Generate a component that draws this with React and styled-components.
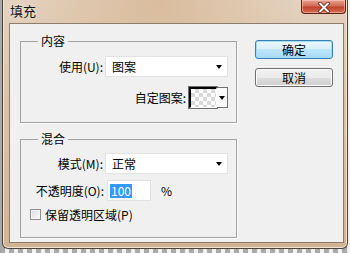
import React from 'react'
import styled, { createGlobalStyle } from 'styled-components'

const GlobalStyle = createGlobalStyle`
  html, body {
    margin: 0;
    padding: 0;
  }
  body {
    width: 350px;
    height: 253px;
    overflow: hidden;
    background: repeating-linear-gradient(90deg, #a9a9a9 0 5px, #f2f2f2 5px 9px);
    font-family: "Noto Sans CJK SC", "Microsoft YaHei", sans-serif;
    font-size: 12px;
    color: #000;
  }
`

const Window = styled.div`
  margin-left: 2px;
  width: 346px;
  height: 249px;
  box-sizing: border-box;
  border: 1px solid #4f4236;
  border-top: none;
  border-radius: 0 0 6px 6px;
  background:
    radial-gradient(ellipse at 45% 0%, #d9bc9d 0%, rgba(217, 188, 157, 0) 55%),
    linear-gradient(180deg, #e4d2bf 0%, #dcc3a8 40%, #d2b391 100%);
  box-shadow: inset 1px 0 0 #efe3d6, inset -1px 0 0 #efe3d6, inset 0 -1px 0 #efe3d6;
  display: flex;
  flex-direction: column;
  padding: 0 3px 5px 6px;
`

const TitleBar = styled.div`
  height: 23px;
  display: flex;
  justify-content: space-between;
  align-items: flex-start;
`

const Title = styled.div`
  padding: 3px 0 0 1px;
  font-size: 13px;
  line-height: 16px;
  color: #111;
  text-shadow: 0 0 6px rgba(255, 255, 255, 0.8);
`

const CloseButton = styled.div`
  width: 45px;
  height: 14px;
  margin-right: -2px;
  box-sizing: border-box;
  border: 1px solid #5e1f14;
  border-top: none;
  border-radius: 0 0 4px 4px;
  background: linear-gradient(180deg, #e8a393 0%, #d36a55 45%, #c0432b 55%, #d8705a 100%);
  box-shadow: inset 0 0 0 1px rgba(255, 210, 200, 0.5);
  display: flex;
  justify-content: center;
  align-items: flex-end;
`

const Client = styled.div`
  flex: 1;
  border: 1px solid #8f7d6b;
  background: #f0f0f0;
  display: flex;
  gap: 18px;
  padding: 10px 10px 0 10px;
`

const LeftColumn = styled.div`
  width: 217px;
  display: flex;
  flex-direction: column;
  gap: 9px;
`

const Group = styled.fieldset`
  margin: 0;
  padding: 0 0 ${p => p.$bottom}px 0;
  border: 1px solid #a3a3a3;
  box-shadow: 1px 1px 0 #ffffff;
  min-width: 0;
`

const Legend = styled.legend`
  margin-left: 17px;
  padding: 0 3px;
  font-size: 12px;
  line-height: 14px;
`

const Row = styled.div`
  display: flex;
  align-items: center;
  height: ${p => p.$h || 21}px;
  margin-top: ${p => p.$top || 0}px;
  padding-left: ${p => p.$left || 0}px;
  justify-content: ${p => (p.$end ? 'flex-end' : 'flex-start')};
  padding-right: ${p => (p.$end ? 8 : 0)}px;
`

const Label = styled.div`
  width: ${p => p.$w}px;
  text-align: right;
  white-space: nowrap;
  line-height: 14px;
  margin-right: ${p => p.$gap || 2}px;
`

const Select = styled.div`
  width: 123px;
  height: 21px;
  box-sizing: border-box;
  background: #ffffff;
  border: 1px solid #e2e2e2;
  display: flex;
  align-items: center;
  justify-content: space-between;
  padding: 0 5px 0 6px;
  line-height: 14px;
`

const Arrow = styled.span`
  width: 0;
  height: 0;
  border-left: 3.5px solid transparent;
  border-right: 3.5px solid transparent;
  border-top: 4px solid #000;
`

const PatternPicker = styled.div`
  display: flex;
  height: 21px;
  margin-left: 1px;
`

const Swatch = styled.div`
  width: 28px;
  height: 21px;
  box-sizing: border-box;
  border-top: 2px solid #000;
  border-left: 2px solid #000;
  border-right: 1px solid #fff;
  border-bottom: 1px solid #fff;
  outline: 1px solid #707070;
  background-color: #ffffff;
  background-image:
    linear-gradient(45deg, #d8d8d8 25%, transparent 25%, transparent 75%, #d8d8d8 75%),
    linear-gradient(45deg, #d8d8d8 25%, transparent 25%, transparent 75%, #d8d8d8 75%);
  background-size: 8px 8px;
  background-position: 0 0, 4px 4px;
`

const PickerArrow = styled.div`
  width: 11px;
  height: 21px;
  box-sizing: border-box;
  border: 1px solid #707070;
  border-left: none;
  background: #fafafa;
  display: flex;
  align-items: center;
  justify-content: center;
`

const NumberInput = styled.div`
  width: 44px;
  height: 21px;
  box-sizing: border-box;
  background: #ffffff;
  border: 1px solid #e2e2e2;
  display: flex;
  align-items: center;
  padding-left: 2px;
`

const Selected = styled.span`
  background: #3399ff;
  color: #ffffff;
  line-height: 14px;
  padding: 0 1px;
`

const Unit = styled.span`
  margin-left: 10px;
`

const CheckBox = styled.span`
  width: 11px;
  height: 11px;
  box-sizing: border-box;
  border: 1px solid #8e8f8f;
  background: linear-gradient(135deg, #dcdcdc, #fbfbfb);
  box-shadow: inset 0 0 0 1px #f4f4f4;
  margin-right: 4px;
`

const RightColumn = styled.div`
  width: 78px;
  padding-top: 6px;
  display: flex;
  flex-direction: column;
  gap: 9px;
`

const Button = styled.div`
  height: 19px;
  box-sizing: border-box;
  border: 1px solid ${p => (p.$default ? '#3c7fb1' : '#707070')};
  border-radius: 3px;
  background: ${p =>
    p.$default
      ? 'linear-gradient(180deg, #eaf6fd 0%, #d9f0fc 50%, #bee6fd 50%, #a7d9f5 100%)'
      : 'linear-gradient(180deg, #f2f2f2 0%, #ebebeb 50%, #dddddd 50%, #cfcfcf 100%)'};
  box-shadow: inset 0 0 0 1px ${p => (p.$default ? '#9fdcf6' : '#fcfcfc')};
  display: flex;
  align-items: center;
  justify-content: center;
  line-height: 14px;
`

const App = () => {
  return (
    <>
      <GlobalStyle />
      <Window>
        <TitleBar>
          <Title>填充</Title>
          <CloseButton>
            <svg width="14" height="11" viewBox="0 0 14 11">
              <path d="M3 1.5 L11 9.5 M11 1.5 L3 9.5" stroke="#5a1a10" strokeWidth="3.4" strokeLinecap="round" />
              <path d="M3 1.5 L11 9.5 M11 1.5 L3 9.5" stroke="#ffffff" strokeWidth="2" strokeLinecap="round" />
            </svg>
          </CloseButton>
        </TitleBar>
        <Client>
          <LeftColumn>
            <Group $bottom={14}>
              <Legend>内容</Legend>
              <Row $top={8}>
                <Label $w={82}>使用(U):</Label>
                <Select>
                  <span>图案</span>
                  <Arrow />
                </Select>
              </Row>
              <Row $top={10} $end>
                <Label $w={70}>自定图案:</Label>
                <PatternPicker>
                  <Swatch />
                  <PickerArrow>
                    <Arrow />
                  </PickerArrow>
                </PatternPicker>
              </Row>
            </Group>
            <Group $bottom={14}>
              <Legend>混合</Legend>
              <Row $top={7}>
                <Label $w={82}>模式(M):</Label>
                <Select>
                  <span>正常</span>
                  <Arrow />
                </Select>
              </Row>
              <Row $top={6}>
                <Label $w={83} $gap={3}>不透明度(O):</Label>
                <NumberInput>
                  <Selected>100</Selected>
                </NumberInput>
                <Unit>%</Unit>
              </Row>
              <Row $top={4} $left={9} $h={18}>
                <CheckBox />
                <span>保留透明区域(P)</span>
              </Row>
            </Group>
          </LeftColumn>
          <RightColumn>
            <Button $default>确定</Button>
            <Button>取消</Button>
          </RightColumn>
        </Client>
      </Window>
    </>
  )
}

export default App
